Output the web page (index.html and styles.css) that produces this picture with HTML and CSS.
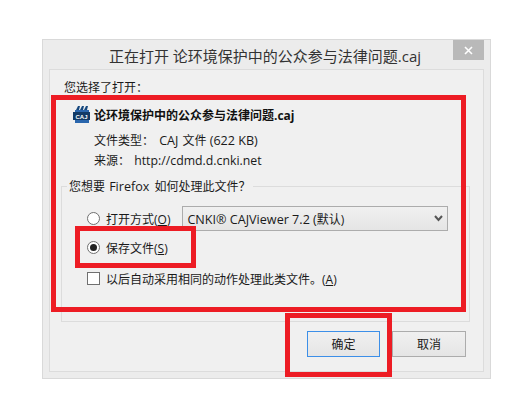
FILE: index.html
```html
<!DOCTYPE html>
<html lang="zh-CN">
<head>
<meta charset="utf-8">
<title>正在打开</title>
<link rel="stylesheet" href="styles.css">
</head>
<body>
<div class="window">
  <div class="titlebar">
    <span class="title">正在打开 论环境保护中的公众参与法律问题.caj</span>
    <span class="close"><svg width="11" height="11" viewBox="0 0 11 11"><path d="M2 2 L9 9 M9 2 L2 9" stroke="#fff" stroke-width="1.6"/></svg></span>
  </div>
  <div class="pane">
    <div class="chosen">您选择了打开<span class="punct">：</span></div>
    <div class="file">
      <svg class="file-icon" width="17" height="19" viewBox="0 0 17 19">
        <path d="M3 5 L5 1 H7 L6 5 Z M7 5 L9 1 H11 L10 5 Z M11 5 L13 1 H15 L14 5 Z" fill="#16487f"/>
        <rect x="2" y="5" width="14" height="13" fill="#2a66ad"/>
        <rect x="0" y="7" width="17" height="8" fill="#123a66"/>
        <text x="8.5" y="13.6" class="icon-text">CAJ</text>
      </svg>
      <span class="file-name">论环境保护中的公众参与法律问题.caj</span>
    </div>
    <div class="meta">
      <div>文件类型<span class="punct">：</span> <span class="lat wide caj">CAJ</span> 文件 <span class="lat wide">(622 KB)</span></div>
      <div>来源<span class="punct">：</span> <span class="lat url">http://cdmd.d.cnki.net</span></div>
    </div>
    <fieldset class="group">
      <legend>您想要 <span class="lat wide fox">Firefox</span> 如何处理此文件<span class="punct">？</span></legend>
      <div class="row open-row">
        <span class="radio"></span>
        <span class="label">打开方式(<u>O</u>)</span>
        <div class="select">
          <span><span class="lat wide">CNKI® CAJViewer 7.2 (</span>默认)</span>
          <svg width="9" height="7" viewBox="0 0 9 7"><path d="M1 1 L4.5 5 L8 1" fill="none" stroke="#555" stroke-width="2"/></svg>
        </div>
      </div>
      <div class="row save-row">
        <span class="radio checked"></span>
        <span class="label">保存文件(<u>S</u>)</span>
      </div>
      <div class="row auto-row">
        <span class="check"></span>
        <span class="label">以后自动采用相同的动作处理此类文件。(<u>A</u>)</span>
      </div>
    </fieldset>
    <div class="buttons">
      <button class="btn primary">确定</button>
      <button class="btn">取消</button>
    </div>
  </div>
  <div class="mark mark-main"></div>
  <div class="mark mark-save"></div>
  <div class="mark mark-ok"></div>
</div>
</body>
</html>
```

FILE: styles.css
```css
* { box-sizing: border-box; }
html, body { margin: 0; padding: 0; background: #fff; }
body {
  width: 522px;
  height: 413px;
  overflow: hidden;
  padding: 39px 0 0 42px;
  font-family: "Open Sans", "Noto Sans CJK SC", sans-serif;
  font-size: 12px;
  color: #1a1a1a;
}
.window {
  position: relative;
  width: 449px;
  height: 340px;
  background: #ececec;
  border: 1px solid #d9d9d9;
  padding: 0 6px 6px;
  display: flex;
  flex-direction: column;
}
.titlebar {
  height: 29px;
  flex: none;
  display: flex;
  align-items: center;
  justify-content: center;
  position: relative;
}
.title { font-size: 15px; color: #333; margin: 1px 3px 0 0; }
.close {
  position: absolute;
  right: 0;
  top: 0;
  width: 31px;
  height: 20px;
  background: #b9b9b9;
  display: flex;
  align-items: center;
  justify-content: center;
}
.pane {
  flex: 1;
  background: #f0f0f0;
  border: 1px solid #dcdcdc;
  padding: 9px 13px 0 11px;
  display: flex;
  flex-direction: column;
}
.punct, .lat { line-height: 1; }
.punct { font-family: "Noto Sans CJK TC", sans-serif; }
.lat.wide { font-size: 12.6px; }
.lat.url { font-size: 12.3px; margin-left: 1px; }
.lat.caj { margin: 0 1px 0 2px; }
.lat.fox { margin: 0 2px 0 1px; }
.chosen { height: 17px; line-height: 17px; margin-left: 3px; }
.file {
  display: flex;
  align-items: center;
  gap: 4px;
  margin: 9px 0 0 12px;
  height: 19px;
}
.file-name { font-weight: 700; color: #111; }
.icon-text { font: 700 6px "Liberation Sans", sans-serif; fill: #fff; text-anchor: middle; }
.meta {
  margin: 7px 0 0 33px;
}
.meta div { height: 20px; line-height: 20px; }
.group {
  margin: 7px 0 0;
  padding: 0;
  border: 1px solid #dcdcdc;
  width: 409px;
  height: 144px;
  min-width: 0;
}
.group legend { padding: 0 2px; margin-left: 5px; height: 17px; line-height: 17px; }
.row { display: flex; align-items: center; }
.open-row { margin: 11px 21px 0 25px; height: 25px; }
.save-row { margin: 4px 0 0 25px; height: 25px; }
.auto-row { margin: 6px 0 0 25px; height: 25px; }
.radio {
  width: 13px;
  height: 13px;
  border-radius: 50%;
  border: 1px solid #707070;
  background: #fff;
  flex: none;
  display: flex;
  align-items: center;
  justify-content: center;
}
.radio.checked::after {
  content: "";
  width: 7px;
  height: 7px;
  border-radius: 50%;
  background: #222;
}
.check {
  width: 13px;
  height: 13px;
  border: 1px solid #707070;
  background: #fff;
  flex: none;
}
.label { margin-left: 6px; white-space: nowrap; }
.select {
  margin-left: 12px;
  flex: 1;
  height: 25px;
  border: 1px solid #acacac;
  background: linear-gradient(#f0f0f0, #e5e5e5);
  display: flex;
  align-items: center;
  justify-content: space-between;
  padding: 0 4px;
}
.buttons {
  display: flex;
  gap: 12px;
  margin: 9px 0 0 246px;
}
.btn {
  width: 74px;
  height: 26px;
  border: 1px solid #acacac;
  background: linear-gradient(#f0f0f0, #e5e5e5);
  font: inherit;
  color: #1a1a1a;
  padding: 0;
}
.btn.primary { border-color: #3c8fe8; width: 73px; }
.mark {
  position: absolute;
  border: 5px solid #ed1c24;
  pointer-events: none;
}
.mark-main { left: 8px; top: 55px; width: 415px; height: 217px; }
.mark-save { left: 32px; top: 186px; width: 121px; height: 42px; }
.mark-ok { left: 242px; top: 273px; width: 107px; height: 64px; }
```
